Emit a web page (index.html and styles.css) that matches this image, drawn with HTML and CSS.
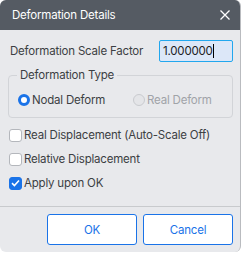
FILE: index.html
```html
<!DOCTYPE html>
<html>
<head>
<meta charset="utf-8">
<link rel="stylesheet" href="styles.css">
</head>
<body>
<div class="dialog">
  <div class="titlebar">
    <span class="title">Deformation Details</span>
    <svg class="close" width="10" height="10" viewBox="0 0 10 10"><path d="M0.5 0.5L9.5 9.5M9.5 0.5L0.5 9.5" stroke="#fff" stroke-width="1.3" fill="none"/></svg>
  </div>
  <div class="content">
    <div class="row-scale">
      <span class="label">Deformation Scale Factor</span>
      <div class="input"><span>1.000000</span><span class="caret"></span></div>
    </div>
    <div class="group">
      <div class="legend">Deformation Type</div>
      <div class="radios">
        <label class="radio-item"><span class="radio on"></span>Nodal Deform</label>
        <label class="radio-item disabled"><span class="radio off"></span>Real Deform</label>
      </div>
    </div>
    <div class="checks">
      <label class="check-item"><span class="box"></span>Real Displacement (Auto-Scale Off)</label>
      <label class="check-item"><span class="box"></span>Relative Displacement</label>
      <label class="check-item"><span class="box checked"><svg width="9" height="8" viewBox="0 0 9 8"><path d="M1 4.2L3.4 6.5L8 1.5" stroke="#fff" stroke-width="1.6" fill="none"/></svg></span>Apply upon OK</label>
    </div>
  </div>
  <div class="footer">
    <button class="btn">OK</button>
    <button class="btn">Cancel</button>
  </div>
</div>
</body>
</html>
```
FILE: styles.css
```css
html, body { margin: 0; padding: 0; background: #ffffff; }
body { font-family: "Inter", "Liberation Sans", sans-serif; font-size: 11.5px; letter-spacing: -0.2px; color: #3c4043; }
.dialog {
  width: 240px; height: 252px; background: #e8e9ec;
  border-radius: 6px; border-right: 1px solid #b9bbbf;
  overflow: hidden; display: flex; flex-direction: column;
}
.titlebar {
  height: 30px; background: #555b63; display: flex; align-items: center;
  justify-content: space-between; padding: 0 10px 0 12px; flex-shrink: 0;
}
.title { color: #ffffff; font-size: 11.5px; }
.content { padding: 10px 7px 0 8px; flex: 1; }
.row-scale { display: flex; align-items: center; justify-content: space-between; height: 22px; padding-left: 2px; }
.label { color: #3c4043; }
.input {
  width: 69px; height: 20px; box-sizing: content-box; border: 1px solid #22a7ee; border-radius: 2px;
  background: #dce7f8; display: flex; align-items: center; padding-left: 3px; color: #202124;
}
.caret { width: 1px; height: 14px; background: #000; }
.group {
  margin-top: 13px; border: 1px solid #d2d4d8; border-radius: 4px; height: 41px; position: relative;
}
.legend {
  position: absolute; top: -8px; left: 8px; padding: 0 3px; background: #e8e9ec; color: #3c4043;
}
.radios { display: flex; padding: 17px 0 0 9px; }
.radio-item { display: flex; align-items: center; width: 115px; flex-shrink: 0; }
.radio-item.disabled { color: #a0a3a8; width: auto; }
.radio { width: 12px; height: 12px; border-radius: 50%; box-sizing: border-box; margin-right: 2px; }
.radio.on { border: 3px solid #1a73e8; background: #fff; }
.radio.off { border: 1px solid #c9cbcf; background: #e4e5e8; }
.checks { padding: 10px 0 0 1px; display: flex; flex-direction: column; gap: 10px; }
.check-item { display: flex; align-items: center; height: 14px; }
.box {
  width: 13px; height: 13px; box-sizing: border-box; border: 1px solid #b4b7bc; border-radius: 3px;
  background: #fff; margin-right: 2px; display: flex; align-items: center; justify-content: center;
}
.box.checked { background: #1a73e8; border-color: #1a73e8; }
.footer {
  border-top: 1px solid #c8cacd; height: 46px; box-sizing: border-box; display: flex;
  justify-content: flex-end; gap: 6px; padding: 7px 7px 0 0;
}
.btn {
  width: 90px; height: 31px; border: 1px solid #1a73e8; border-radius: 3px; background: #ffffff;
  color: #1a73e8; font-family: "Inter", "Liberation Sans", sans-serif; font-size: 11.5px; letter-spacing: -0.2px; padding: 0;
}
```
